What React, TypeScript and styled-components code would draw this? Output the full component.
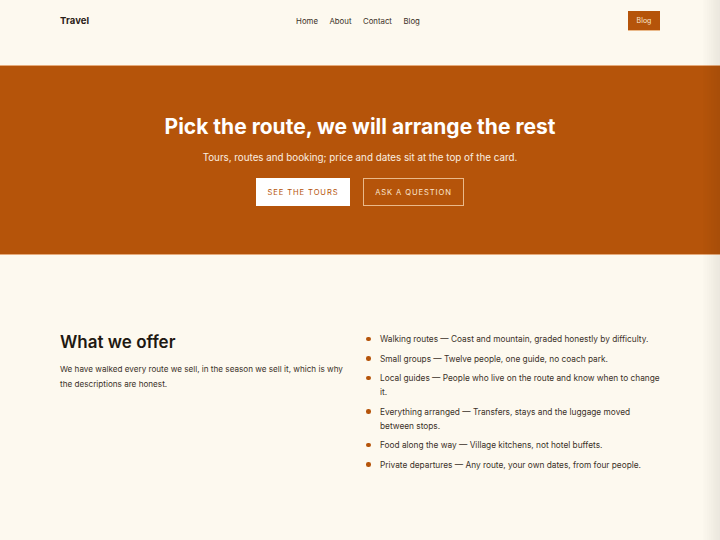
import React from "react";
import styled, { createGlobalStyle } from "styled-components";

const Global = createGlobalStyle`
  html, body { margin: 0; padding: 0; background: #fdf9ef; }
  body { font-family: "Inter", "DejaVu Sans", sans-serif; color: #2a2118; }
  * { box-sizing: border-box; }
`;

const Page = styled.div`
  min-height: 540px;
  background: #fdf9ef;
  position: relative;
  &::after {
    content: "";
    position: fixed;
    top: 0;
    right: 0;
    width: 18px;
    height: 100%;
    background: linear-gradient(to right, rgba(0,0,0,0), rgba(0,0,0,0.07));
    pointer-events: none;
  }
`;

const Header = styled.header`
  height: 65px;
  display: grid;
  grid-template-columns: 1fr auto 1fr;
  align-items: start;
  padding: 11px 60px 0;
`;

const Logo = styled.div`
  font-size: 9.5px;
  font-weight: 700;
  padding-top: 4px;
  letter-spacing: 0.1px;
`;

const Nav = styled.nav`
  display: flex;
  gap: 11.5px;
  font-size: 7.8px;
  padding-top: 5px;
  color: #3b3128;
  margin-left: -4px;
`;

const HeaderRight = styled.div`
  display: flex;
  justify-content: flex-end;
`;

const HeaderButton = styled.a`
  background: #b5540a;
  color: #fbe6cf;
  font-size: 7px;
  width: 32px;
  height: 20px;
  display: flex;
  align-items: center;
  justify-content: center;
  border-bottom: 1px solid #eab98a;
`;

const Hero = styled.section`
  background: #b5540a;
  border-top: 1px solid #e6ab7b;
  border-bottom: 1px solid #e6ab7b;
  height: 190px;
  display: flex;
  flex-direction: column;
  align-items: center;
  padding-top: 48px;
  color: #fff;
`;

const HeroTitle = styled.h1`
  margin: 0;
  font-size: 21px;
  font-weight: 700;
  line-height: 25px;
  white-space: nowrap;
`;

const HeroText = styled.p`
  margin: 13px 0 0;
  font-size: 9.8px;
  line-height: 12px;
  color: #fbeee0;
`;

const Actions = styled.div`
  display: flex;
  gap: 13px;
  margin-top: 14px;
`;

const HeroButton = styled.a<{ $solid?: boolean }>`
  height: 28px;
  display: flex;
  align-items: center;
  justify-content: center;
  white-space: nowrap;
  font-size: 7.6px;
  letter-spacing: 0.9px;
  text-transform: uppercase;
  background: ${(p) => (p.$solid ? "#ffffff" : "transparent")};
  color: ${(p) => (p.$solid ? "#b5540a" : "#fbe6cf")};
  border: 1.5px solid ${(p) => (p.$solid ? "#ffffff" : "#eab98a")};
  width: ${(p) => (p.$solid ? "94px" : "101px")};
`;

const Offer = styled.section`
  display: grid;
  grid-template-columns: 1fr 1fr;
  gap: 12px;
  padding: 76px 60px 0;
`;

const OfferTitle = styled.h2`
  margin: 0;
  font-size: 17px;
  font-weight: 600;
  line-height: 22px;
  color: #1f1912;
`;

const OfferText = styled.p`
  margin: 9px 0 0;
  font-size: 8.15px;
  line-height: 15px;
  color: #3b3128;
  max-width: 290px;
`;

const List = styled.ul`
  list-style: none;
  margin: 1px 0 0;
  padding: 0;
  display: flex;
  flex-direction: column;
  gap: 5.5px;
`;

const Item = styled.li`
  display: flex;
  gap: 9.5px;
  font-size: 8.3px;
  line-height: 14px;
  color: #3b3128;
  max-width: 298px;
  &::before {
    content: "";
    flex: none;
    width: 4.5px;
    height: 4.5px;
    border-radius: 50%;
    background: #b5540a;
    margin-top: 4.5px;
  }
`;

const items = [
  "Walking routes — Coast and mountain, graded honestly by difficulty.",
  "Small groups — Twelve people, one guide, no coach park.",
  "Local guides — People who live on the route and know when to change it.",
  "Everything arranged — Transfers, stays and the luggage moved between stops.",
  "Food along the way — Village kitchens, not hotel buffets.",
  "Private departures — Any route, your own dates, from four people.",
];

export default function App() {
  return (
    <Page>
      <Global />
      <Header>
        <Logo>Travel</Logo>
        <Nav>
          <span>Home</span>
          <span>About</span>
          <span>Contact</span>
          <span>Blog</span>
        </Nav>
        <HeaderRight>
          <HeaderButton>Blog</HeaderButton>
        </HeaderRight>
      </Header>
      <Hero>
        <HeroTitle>Pick the route, we will arrange the rest</HeroTitle>
        <HeroText>Tours, routes and booking; price and dates sit at the top of the card.</HeroText>
        <Actions>
          <HeroButton $solid>See the tours</HeroButton>
          <HeroButton>Ask a question</HeroButton>
        </Actions>
      </Hero>
      <Offer>
        <div>
          <OfferTitle>What we offer</OfferTitle>
          <OfferText>
            We have walked every route we sell, in the season we sell it, which is why the descriptions are honest.
          </OfferText>
        </div>
        <List>
          {items.map((t) => (
            <Item key={t}>{t}</Item>
          ))}
        </List>
      </Offer>
    </Page>
  );
}
